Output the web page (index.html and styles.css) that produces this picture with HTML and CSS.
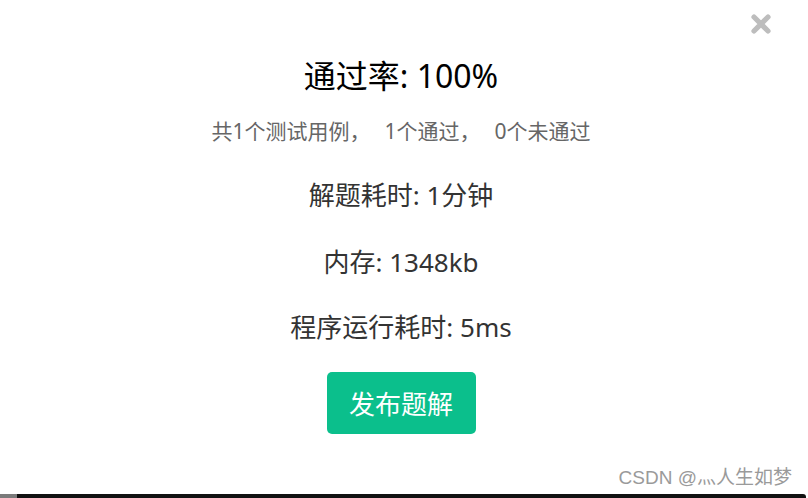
FILE: index.html
```html
<!DOCTYPE html>
<html lang="zh-CN">
<head>
<meta charset="utf-8">
<title>通过率</title>
<link rel="stylesheet" href="styles.css">
</head>
<body>
<div class="page">
  <button class="close" aria-label="关闭">
    <svg width="22" height="22" viewBox="0 0 22 22"><path d="M4 4 L18 18 M18 4 L4 18" stroke="#bdbdbd" stroke-width="5.2" stroke-linecap="round" fill="none"/></svg>
  </button>
  <div class="result">
    <h1 class="title">通过率: 100%</h1>
    <p class="summary">共1个测试用例，<span class="gap"></span>1个通过，<span class="gap"></span>0个未通过</p>
    <p class="row r1">解题耗时: 1分钟</p>
    <p class="row r2">内存: 1348kb</p>
    <p class="row r3">程序运行耗时: 5ms</p>
    <button class="publish">发布题解</button>
  </div>
  <div class="watermark">CSDN @灬人生如梦</div>
  <div class="bottom"><span class="edge"></span><span class="bar"></span></div>
</div>
</body>
</html>
```
FILE: styles.css
```css
* { box-sizing: border-box; }
html, body { margin: 0; padding: 0; background: #fff; }
body {
  font-family: "Noto Sans", "Noto Sans CJK SC", sans-serif;
  width: 808px;
  height: 498px;
  overflow: hidden;
}
.page {
  position: relative;
  width: 808px;
  height: 498px;
  display: flex;
  flex-direction: column;
}
.close {
  position: absolute;
  left: 750px;
  top: 13px;
  width: 22px;
  height: 22px;
  padding: 0;
  border: 0;
  background: none;
}
.close svg { display: block; }
.result {
  flex: 1;
  display: flex;
  flex-direction: column;
  align-items: center;
  padding-top: 56px;
  padding-right: 6px;
}
.title {
  margin: 0;
  font-size: 32px;
  font-weight: 400;
  line-height: 40px;
  color: #000;
}
.summary {
  margin: 20px 0 0;
  font-size: 21px;
  line-height: 30px;
  color: #666;
}
.gap { display: inline-block; width: 14px; }
.row {
  margin: 0;
  font-size: 26px;
  line-height: 36px;
  color: #333;
}
.r1 { margin-top: 31px; }
.r2 { margin-top: 31px; }
.r3 { margin-top: 29px; }
.publish {
  margin-top: 27px;
  width: 149px;
  height: 62px;
  border: 0;
  border-radius: 5px;
  background: #0bbf8c;
  color: #fff;
  font-family: "Noto Sans", "Noto Sans CJK SC", sans-serif;
  font-size: 26px;
  padding: 0;
}
.watermark {
  position: absolute;
  right: 16px;
  top: 466px;
  font-size: 19px;
  line-height: 24px;
  color: #9a9a9a;
  font-family: "Liberation Sans", "Noto Sans CJK SC", sans-serif;
}
.bottom {
  display: flex;
  height: 4px;
  width: 806px;
}
.edge { width: 17px; background: #7a7a7a; }
.bar { flex: 1; background: #111; border-top-right-radius: 3px; }
```
